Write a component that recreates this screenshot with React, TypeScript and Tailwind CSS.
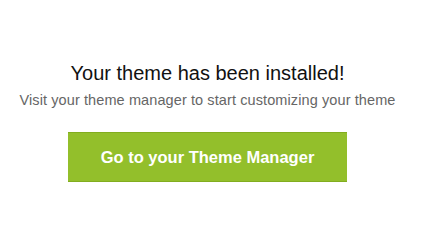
export default function App() {
  return (
    <div className="h-[228px] w-[445px] bg-white font-['Liberation_Sans',Arial,sans-serif]">
      <div className="flex w-[415px] flex-col items-center pt-[61px] text-center">
        <h1 className="text-[20px] leading-[24px] text-[#111]">Your theme has been installed!</h1>
        <p className="mt-[6px] text-[14.5px] leading-[18px] tracking-[0.1px] text-[#666]">
          Visit your theme manager to start customizing your theme
        </p>
        <button className="mt-[23px] h-[50px] w-[279px] border-y border-[#82ad1f] bg-[#93bf2b] text-[16.5px] font-semibold text-white">
          Go to your Theme Manager
        </button>
      </div>
    </div>
  )
}
